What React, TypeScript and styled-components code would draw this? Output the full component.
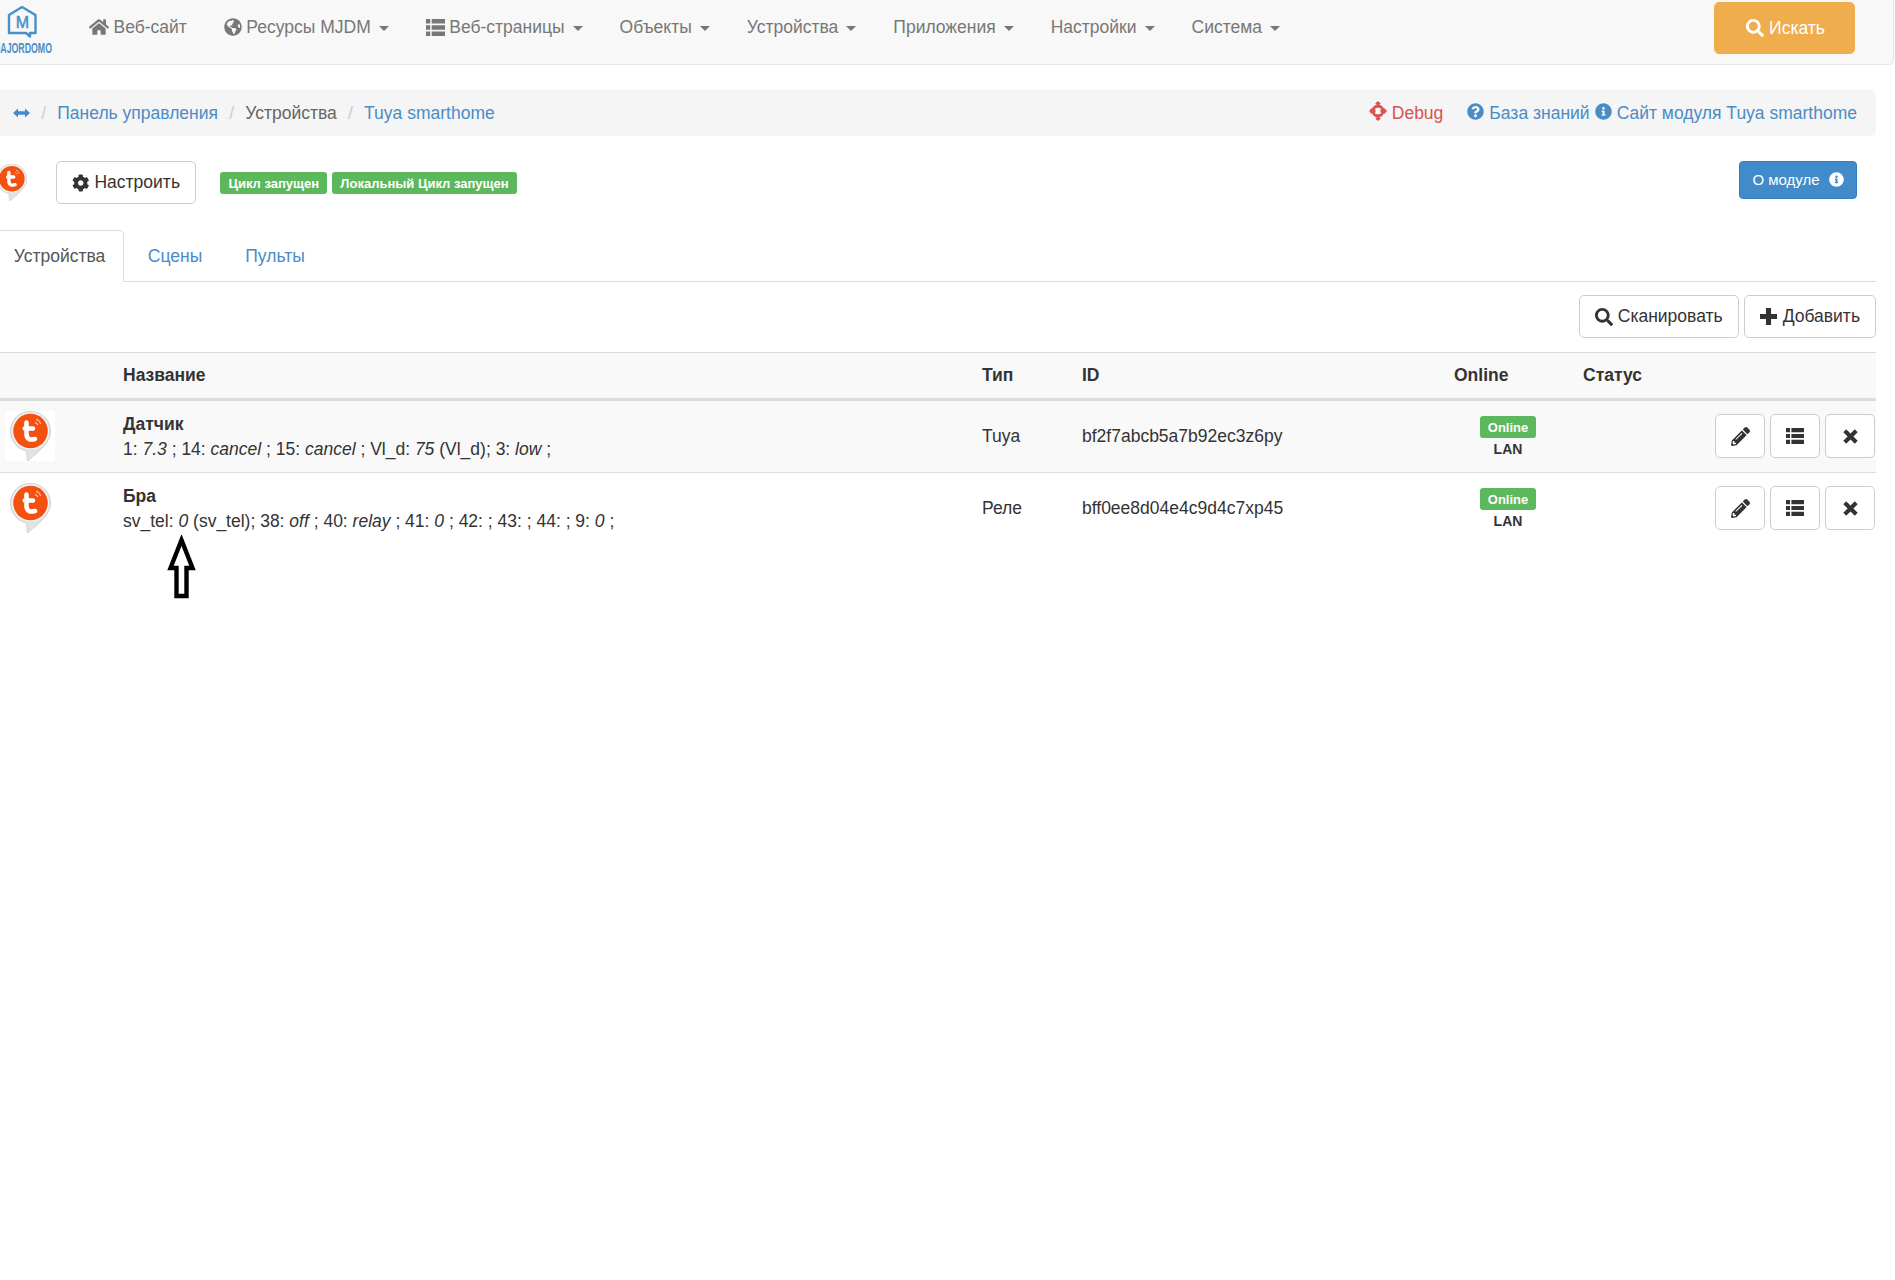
import React from "react";
import styled, { createGlobalStyle } from "styled-components";
import { FaHome, FaGlobeAmericas, FaCog, FaSearch, FaPencilAlt, FaQuestionCircle, FaInfoCircle } from "react-icons/fa";

const Global = createGlobalStyle`
  html, body { margin: 0; padding: 0; background: #fff; }
  body { font-family: "Liberation Sans", Arial, sans-serif; font-size: 17.5px; color: #333; overflow-x: hidden; }
  * { box-sizing: border-box; }
`;

const Page = styled.div`
  position: relative;
  width: 1895px;
  min-height: 1280px;
  overflow: hidden;
`;

const Navbar = styled.nav`
  display: flex;
  align-items: flex-start;
  height: 65px;
  width: 1894px;
  background: #f8f8f8;
  border-bottom: 1px solid #e7e7e7;
  border-right: 1px solid #e7e7e7;
  border-bottom-right-radius: 5px;
`;

const LogoWrap = styled.div`
  width: 89px;
  height: 60px;
  flex: none;
`;

const NavList = styled.ul`
  display: flex;
  gap: 37px;
  list-style: none;
  margin: 0;
  padding: 0;
  height: 54px;
  align-items: center;
  flex: 1;
`;

const NavItem = styled.li`
  display: flex;
  align-items: center;
  color: #777;
  font-size: 17.5px;
  white-space: nowrap;
  svg { flex: none; margin-right: 4.5px; }
`;

const Caret = styled.span`
  display: inline-block;
  width: 0;
  height: 0;
  margin-left: 8px;
  margin-top: 2px;
  border-top: 5px solid #777;
  border-left: 5px solid transparent;
  border-right: 5px solid transparent;
`;

const SearchButton = styled.button`
  display: flex;
  align-items: center;
  justify-content: center;
  gap: 5px;
  width: 141px;
  height: 52px;
  margin: 2px 38px 0 0;
  padding: 0 0 0 2px;
  background: #f0ad4e;
  border: 1px solid #f0ad4e;
  border-radius: 5px;
  color: #fff;
  font: inherit;
  font-size: 17.5px;
`;

const Main = styled.main`
  padding-right: 19px;
`;

const Breadcrumb = styled.div`
  display: flex;
  align-items: center;
  justify-content: space-between;
  height: 46px;
  margin-top: 25px;
  padding: 0 19px 0 13px;
  background: #f5f5f5;
  border-radius: 0 5px 5px 0;
`;

const Crumbs = styled.div`
  display: flex;
  align-items: center;
`;

const Sep = styled.span`
  color: #ccc;
  margin: 0 11.2px;
`;

const Link = styled.span<{ $c?: string }>`
  display: inline-flex;
  align-items: center;
  color: ${(p) => p.$c || "#4a8cc7"};
  white-space: nowrap;
  svg { flex: none; }
`;

const DebugLink = styled(Link)`
  margin-right: 19px;
`;

const CrumbLinks = styled.div`
  display: flex;
  align-items: center;
  gap: 5px;
  svg { margin-right: 5px; margin-top: -4px; }
`;

const Plain = styled.span`
  color: #666;
`;

const ModuleBar = styled.div`
  display: flex;
  align-items: flex-start;
  height: 43px;
  margin-top: 25px;
  padding-right: 19px;
`;

const ModuleLogo = styled.div`
  flex: none;
  width: 37px;
  height: 37px;
  margin: 3px 26px 0 -7px;
`;

const DefaultButton = styled.button`
  display: inline-flex;
  align-items: center;
  justify-content: center;
  gap: 5px;
  height: 43px;
  background: #fff;
  border: 1px solid #ccc;
  border-radius: 5px;
  color: #333;
  font: inherit;
  font-size: 17.5px;
  padding: 0 15px;
  white-space: nowrap;
`;

const SetupButton = styled(DefaultButton)`
  width: 140px;
`;

const AddButton = styled(DefaultButton)`
  gap: 6px;
`;

const Labels = styled.div`
  display: flex;
  gap: 4.5px;
  margin: 11px 0 0 24px;
  flex: 1;
`;

const Label = styled.span`
  display: inline-flex;
  align-items: center;
  height: 22px;
  padding: 0 8.4px;
  background: #5cb85c;
  border-radius: 3px;
  color: #fff;
  font-size: 13px;
  font-weight: 700;
  white-space: nowrap;
`;

const AboutButton = styled.button`
  display: inline-flex;
  align-items: center;
  justify-content: center;
  gap: 9px;
  width: 118px;
  height: 38px;
  padding: 0 0 2px;
  background: #428bca;
  border: 1px solid #357ebd;
  border-radius: 4px;
  color: #fff;
  font: inherit;
  font-size: 15px;
`;

const Tabs = styled.div`
  display: flex;
  height: 52px;
  margin-top: 26px;
  border-bottom: 1px solid #ddd;
`;

const Tab = styled.div<{ $active?: boolean; $w: number }>`
  display: flex;
  align-items: center;
  justify-content: center;
  width: ${(p) => p.$w}px;
  height: 52px;
  color: ${(p) => (p.$active ? "#555" : "#4a8cc7")};
  ${(p) =>
    p.$active
      ? `background:#fff;border:1px solid #ddd;border-left:0;border-bottom-color:#fff;border-top-right-radius:5px;padding-right:4px;`
      : ""}
`;

const ActionBar = styled.div`
  display: flex;
  justify-content: flex-end;
  gap: 5px;
  margin-top: 13px;
`;

const Table = styled.div`
  margin-top: 14px;
`;

const columns = "123px 859px 100px 372px 129px 132px 160px";

const HeadRow = styled.div`
  display: grid;
  grid-template-columns: ${columns};
  align-items: center;
  height: 49px;
  background: #f9f9f9;
  border-top: 1px solid #ddd;
  border-bottom: 3px solid #ddd;
  font-weight: 700;
  color: #333;
`;

const Row = styled.div<{ $striped?: boolean }>`
  display: grid;
  grid-template-columns: ${columns};
  height: ${(p) => (p.$striped ? 72 : 71)}px;
  background: ${(p) => (p.$striped ? "#f9f9f9" : "#fff")};
  border-bottom: ${(p) => (p.$striped ? "1px solid #ddd" : "0")};
`;

const IconCell = styled.div`
  padding: 10px 0 0 5px;
`;

const IconBox = styled.div`
  width: 50px;
  height: 50px;
  background: #fff;
`;

const NameCell = styled.div`
  padding-top: 11px;
  line-height: 25px;
`;

const Name = styled.div`
  font-weight: 700;
`;

const Values = styled.div`
  white-space: nowrap;
`;

const MidCell = styled.div`
  align-self: center;
  color: #333;
  white-space: nowrap;
`;

const OnlineCell = styled.div`
  display: flex;
  flex-direction: column;
  align-items: center;
  width: 108px;
  padding-top: 15px;
`;

const OnlineBadge = styled(Label)`
  padding: 0;
  width: 56px;
  justify-content: center;
`;

const Lan = styled.div`
  margin-top: 2px;
  font-size: 14px;
  line-height: 19px;
  font-weight: 700;
`;

const Actions = styled.div`
  display: flex;
  gap: 5px;
  padding-top: 13px;
`;

const SquareButton = styled(DefaultButton)`
  width: 50px;
  padding: 0;
  height: 44px;
`;

const ArrowMark = styled.svg`
  position: absolute;
  left: 166px;
  top: 535px;
`;

const Logo = () => (
  <svg width="52" height="60" viewBox="0 0 52 60">
    <path
      d="M9 15 L22 7 L35.5 15 V33 H30 L30 36.5 L26 33 H9 Z"
      fill="none"
      stroke="#4a90c8"
      strokeWidth="2.4"
      strokeLinejoin="round"
    />
    <text
      x="22.3"
      y="27.5"
      textAnchor="middle"
      fontFamily="'Liberation Sans',sans-serif"
      fontSize="16"
      fill="#4a90c8"
      stroke="#4a90c8"
      strokeWidth="0.5"
    >
      M
    </text>
    <text
      x="-7"
      y="53"
      textLength="59"
      lengthAdjust="spacingAndGlyphs"
      fontFamily="'Liberation Sans',sans-serif"
      fontWeight="700"
      fontSize="14.5"
      fill="#4a90c8"
    >
      MAJORDOMO
    </text>
  </svg>
);

const TuyaIcon = ({ size = 50 }: { size?: number }) => (
  <svg width={size} height={size} viewBox="0 0 50 50">
    <path
      d="M25.5 0.5 C37 0.5 45.5 9 45.5 20 C45.5 31 37 38 22.5 50 L21.5 40 C12 38 5.5 30 5.5 20 C5.5 9 14 0.5 25.5 0.5 Z"
      fill="#e2e2e2"
      stroke="#d4d4d4"
    />
    <circle cx="25.5" cy="20" r="18.6" fill="#f4f4f4" />
    <circle cx="25.5" cy="20" r="17.3" fill="#f4500f" />
    <path
      d="M21.5 11.5 V23 C21.5 28 25 29.5 30 28 M19.8 17.5 H28"
      fill="none"
      stroke="#fff"
      strokeWidth="4.6"
      strokeLinecap="round"
    />
    <path d="M31 8.5 C33.5 9 35 10.8 35.5 13 M30 11.5 C31.5 11.8 32.4 12.8 32.8 14" fill="none" stroke="#fbd3c3" strokeWidth="1.1" />
  </svg>
);

const ResizeH = () => (
  <svg width="17" height="10" viewBox="0 0 17 10">
    <path d="M0 5 L5 0.5 V3.2 H12 V0.5 L17 5 L12 9.5 V6.8 H5 V9.5 Z" fill="#428bca" />
  </svg>
);

const Screenshot = () => (
  <svg width="18" height="20" viewBox="0 0 18 20">
    <g fill="none" stroke="#d9534f">
      <circle cx="9" cy="10" r="5" strokeWidth="3" />
      <path d="M9 1 V6.5 M9 13.5 V19 M1 10 H6.5 M11.5 10 H17" strokeWidth="3" />
    </g>
    <path d="M9 0 L6 3 H12 Z M9 20 L6 17 H12 Z M0 10 L3 7 V13 Z M18 10 L15 7 V13 Z" fill="#d9534f" />
  </svg>
);

const PlusIcon = () => (
  <svg width="17" height="17" viewBox="0 0 16 16">
    <path d="M5.6 0 H10.4 V5.6 H16 V10.4 H10.4 V16 H5.6 V10.4 H0 V5.6 H5.6 Z" fill="#333" />
  </svg>
);

const CrossIcon = () => (
  <svg width="15" height="15" viewBox="0 0 15 15">
    <path d="M3.2 0.3 L7.5 4.6 L11.8 0.3 L14.7 3.2 L10.4 7.5 L14.7 11.8 L11.8 14.7 L7.5 10.4 L3.2 14.7 L0.3 11.8 L4.6 7.5 L0.3 3.2 Z" fill="#333" />
  </svg>
);

const ListIcon = ({ size = 18, color = "#333" }: { size?: number; color?: string }) => (
  <svg width={size} height={size} viewBox="0 0 18 18" fill={color}>
    <path d="M0 1 H4 V5.2 H0 Z M0 6.9 H4 V11.1 H0 Z M0 12.8 H4 V17 H0 Z M5.4 1 H18 V5.2 H5.4 Z M5.4 6.9 H18 V11.1 H5.4 Z M5.4 12.8 H18 V17 H5.4 Z" />
  </svg>
);

const navItems: { text: string; icon?: React.ReactNode; caret?: boolean }[] = [
  { text: "Веб-сайт", icon: <FaHome size={20} /> },
  { text: "Ресурсы MJDM", icon: <FaGlobeAmericas size={18} />, caret: true },
  { text: "Веб-страницы", icon: <ListIcon size={19} color="#777" />, caret: true },
  { text: "Объекты", caret: true },
  { text: "Устройства", caret: true },
  { text: "Приложения", caret: true },
  { text: "Настройки", caret: true },
  { text: "Система", caret: true },
];

const RowActions = () => (
  <Actions>
    <SquareButton><FaPencilAlt size={19} /></SquareButton>
    <SquareButton><ListIcon /></SquareButton>
    <SquareButton><CrossIcon /></SquareButton>
  </Actions>
);

const Online = () => (
  <OnlineCell>
    <OnlineBadge>Online</OnlineBadge>
    <Lan>LAN</Lan>
  </OnlineCell>
);

export default function App() {
  return (
    <Page>
      <Global />
      <Navbar>
        <LogoWrap><Logo /></LogoWrap>
        <NavList>
          {navItems.map((n) => (
            <NavItem key={n.text}>
              {n.icon}
              {n.text}
              {n.caret && <Caret />}
            </NavItem>
          ))}
        </NavList>
        <SearchButton><FaSearch size={18} />Искать</SearchButton>
      </Navbar>
      <Main>
        <Breadcrumb>
          <Crumbs>
            <ResizeH />
            <Sep>/</Sep>
            <Link>Панель управления</Link>
            <Sep>/</Sep>
            <Plain>Устройства</Plain>
            <Sep>/</Sep>
            <Link>Tuya smarthome</Link>
          </Crumbs>
          <CrumbLinks>
            <DebugLink $c="#d9534f"><Screenshot />Debug</DebugLink>
            <Link><FaQuestionCircle size={17} />База знаний</Link>
            <Link><FaInfoCircle size={17} />Сайт модуля Tuya smarthome</Link>
          </CrumbLinks>
        </Breadcrumb>
        <ModuleBar>
          <ModuleLogo><TuyaIcon size={37} /></ModuleLogo>
          <SetupButton><FaCog size={18} />Настроить</SetupButton>
          <Labels>
            <Label>Цикл запущен</Label>
            <Label>Локальный Цикл запущен</Label>
          </Labels>
          <AboutButton>О модуле<FaInfoCircle size={15} /></AboutButton>
        </ModuleBar>
        <Tabs>
          <Tab $active $w={124}>Устройства</Tab>
          <Tab $w={102}>Сцены</Tab>
          <Tab $w={98}>Пульты</Tab>
        </Tabs>
        <ActionBar>
          <DefaultButton><FaSearch size={18} />Сканировать</DefaultButton>
          <AddButton><PlusIcon />Добавить</AddButton>
        </ActionBar>
        <Table>
          <HeadRow>
            <span />
            <span>Название</span>
            <span>Тип</span>
            <span>ID</span>
            <span>Online</span>
            <span>Статус</span>
            <span />
          </HeadRow>
          <Row $striped>
            <IconCell><IconBox><TuyaIcon /></IconBox></IconCell>
            <NameCell>
              <Name>Датчик</Name>
              <Values>1: <i>7.3</i> ; 14: <i>cancel</i> ; 15: <i>cancel</i> ; Vl_d: <i>75</i> (Vl_d); 3: <i>low</i> ;</Values>
            </NameCell>
            <MidCell>Tuya</MidCell>
            <MidCell>bf2f7abcb5a7b92ec3z6py</MidCell>
            <Online />
            <span />
            <RowActions />
          </Row>
          <Row>
            <IconCell><IconBox><TuyaIcon /></IconBox></IconCell>
            <NameCell>
              <Name>Бра</Name>
              <Values>sv_tel: <i>0</i> (sv_tel); 38: <i>off</i> ; 40: <i>relay</i> ; 41: <i>0</i> ; 42: ; 43: ; 44: ; 9: <i>0</i> ;</Values>
            </NameCell>
            <MidCell>Реле</MidCell>
            <MidCell>bff0ee8d04e4c9d4c7xp45</MidCell>
            <Online />
            <span />
            <RowActions />
          </Row>
        </Table>
      </Main>
      <ArrowMark width="32" height="66" viewBox="0 0 32 66">
        <path d="M15.5 5 L4.5 33 H10.5 V61 H20.5 V33 H26.5 Z" fill="#fff" stroke="#000" strokeWidth="4.4" strokeLinejoin="miter" />
      </ArrowMark>
    </Page>
  );
}
